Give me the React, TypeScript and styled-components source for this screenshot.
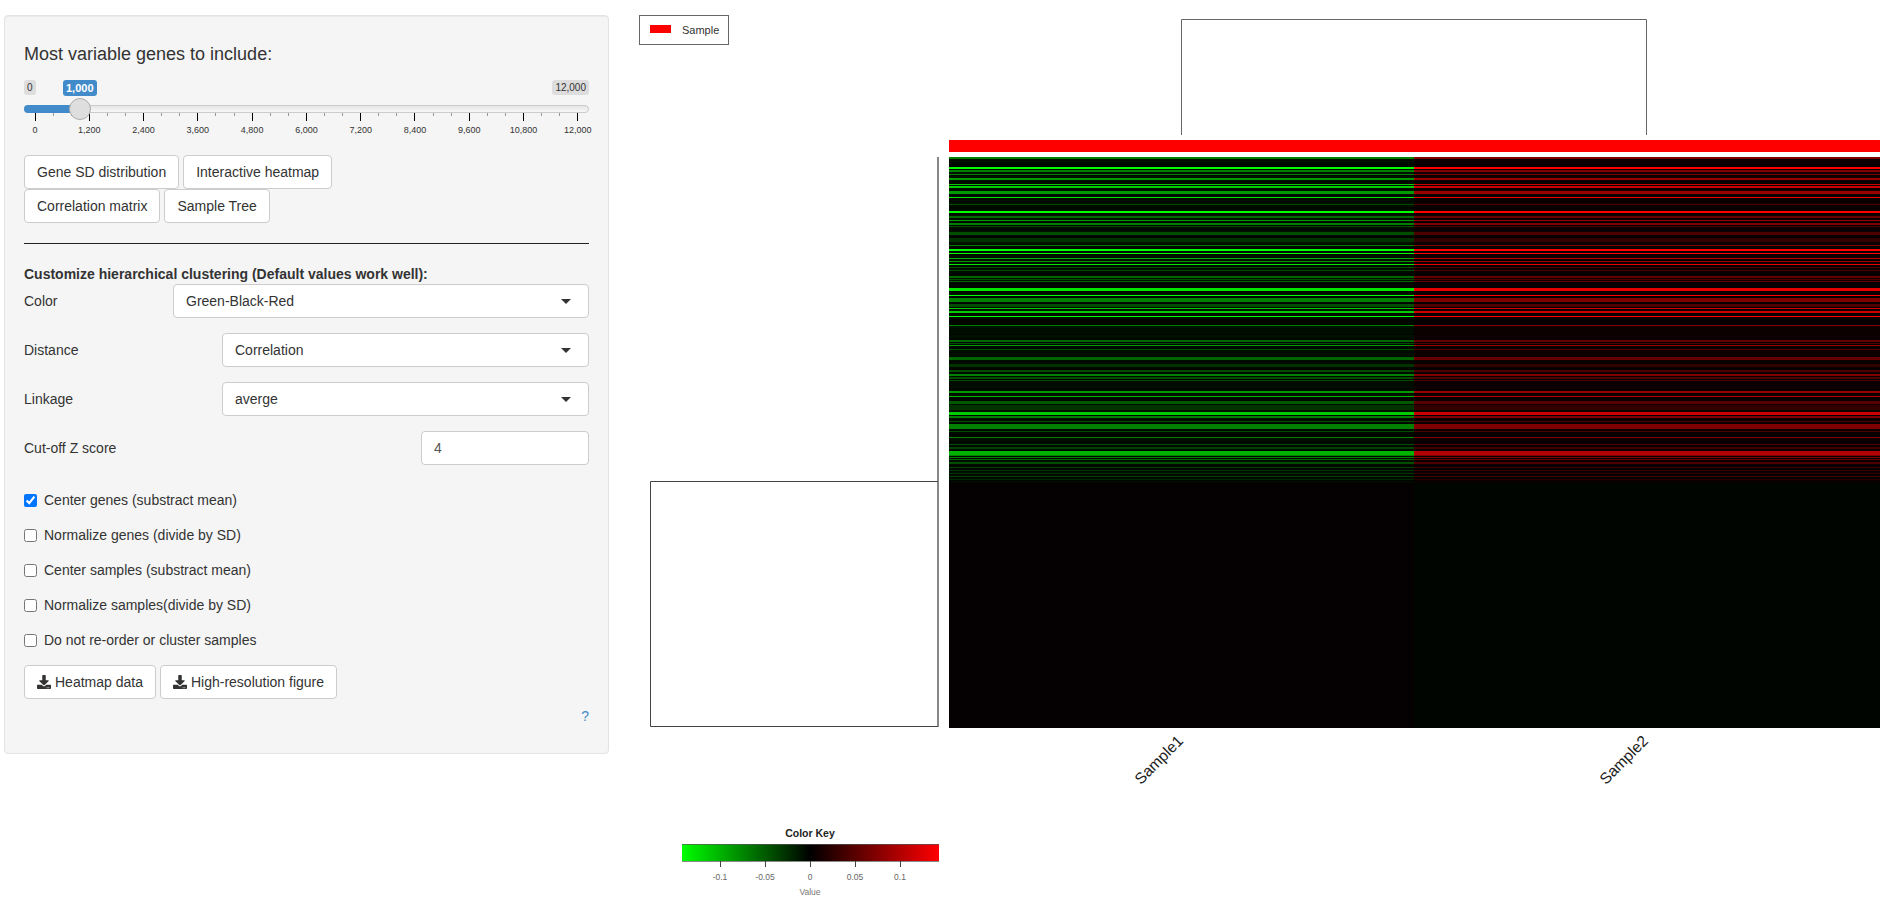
import React from 'react'
import styled, { createGlobalStyle } from 'styled-components'
import { FaDownload } from 'react-icons/fa'

const GlobalStyle = createGlobalStyle`
  html, body {
    margin: 0;
    background: #fff;
    font-family: "Liberation Sans", Arial, sans-serif;
    font-size: 14px;
    color: #333;
    overflow: hidden;
  }
  * { box-sizing: border-box; }
`

const Page = styled.div`
  display: flex;
  width: 1888px;
  height: 903px;
`
const Sidebar = styled.div`
  flex: 0 0 630px;
  padding: 15px 21px 0 4px;
`
const Well = styled.div`
  background: #f5f5f5;
  border: 1px solid #e3e3e3;
  border-radius: 4px;
  box-shadow: inset 0 1px 1px rgba(0, 0, 0, 0.05);
  padding: 19px 19px 27px;
`
const Title = styled.div`
  margin-top: 9px;
  font-size: 18px;
  line-height: 20px;
`
const Slider = styled.div`
  position: relative;
  margin-top: 16px;
  padding-top: 25px;
  height: 75px;
`
const Bubble = styled.span<{ $side: 'left' | 'right' }>`
  position: absolute;
  top: 0;
  ${(p) => p.$side}: 0;
  padding: 1px 3px;
  font-size: 10px;
  line-height: 13px;
  background: #ddd;
  border-radius: 3px;
  color: #333;
`
const ValueBubble = styled.span`
  position: absolute;
  top: 0;
  left: 39px;
  padding: 1px 3px;
  font-size: 11px;
  font-weight: bold;
  line-height: 14px;
  background: #428bca;
  border-radius: 3px;
  color: #fff;
`
const Track = styled.div`
  position: relative;
  height: 8px;
  border: 1px solid #ccc;
  border-radius: 8px;
  background: linear-gradient(to bottom, #ddd -50%, #fff 150%);
`
const Fill = styled.div`
  position: absolute;
  left: -1px;
  top: -1px;
  bottom: -1px;
  background: #428bca;
  border-radius: 8px 0 0 8px;
`
const Handle = styled.div`
  position: absolute;
  top: -8px;
  width: 22px;
  height: 22px;
  border-radius: 50%;
  background: #dedede;
  border: 1px solid #ababab;
`
const Grid = styled.div`
  display: flex;
  justify-content: space-between;
  padding: 0 11px 0 11px;
`
const Tick = styled.div`
  width: 0;
  display: flex;
  flex-direction: column;
  align-items: center;
`
const TickLine = styled.i<{ $major: boolean }>`
  display: block;
  flex: none;
  width: 1px;
  height: ${(p) => (p.$major ? 8 : 3)}px;
  background: ${(p) => (p.$major ? '#000' : '#999')};
`
const TickLabel = styled.span`
  margin-top: 4px;
  font-size: 9px;
  line-height: 11px;
  white-space: nowrap;
  color: #333;
`
const ButtonRow = styled.div`
  display: flex;
  gap: 4px;
`
const Button = styled.button`
  display: inline-flex;
  align-items: center;
  height: 34px;
  padding: 0 12px;
  background: #fff;
  border: 1px solid #ccc;
  border-radius: 4px;
  font: inherit;
  color: #333;
  white-space: nowrap;
  svg { margin-right: 4px; }
`
const Rule = styled.hr`
  margin: 20px 0;
  border: 0;
  border-top: 1px solid #222;
`
const Heading = styled.div`
  font-weight: bold;
  line-height: 20px;
`
const FieldRow = styled.div<{ $gap: number }>`
  display: flex;
  justify-content: space-between;
  align-items: center;
  margin-top: ${(p) => p.$gap}px;
`
const Select = styled.div<{ $width: number }>`
  position: relative;
  width: ${(p) => p.$width}px;
  height: 34px;
  padding: 0 12px;
  line-height: 32px;
  background: #fff;
  border: 1px solid #ccc;
  border-radius: 4px;
  &::after {
    content: '';
    position: absolute;
    right: 17px;
    top: 14px;
    border: 5px solid transparent;
    border-top-color: #333;
    border-bottom: 0;
  }
`
const NumberInput = styled.input`
  width: 168px;
  height: 34px;
  padding: 0 12px;
  background: #fff;
  border: 1px solid #ccc;
  border-radius: 4px;
  font: inherit;
  color: #555;
`
const Checks = styled.div`
  display: flex;
  flex-direction: column;
  gap: 15px;
  margin: 25px 0 15px;
`
const CheckRow = styled.label`
  display: flex;
  align-items: center;
  gap: 7px;
  height: 20px;
  input { margin: 0; width: 13px; height: 13px; }
`
const HelpLink = styled.a`
  display: block;
  margin-top: 7px;
  line-height: 20px;
  text-align: right;
  color: #428bca;
`
const Plot = styled.svg`
  display: block;
  flex: 0 0 1258px;
  height: 903px;
`

const tickValues = Array.from({ length: 31 }, (_, i) => i)

const checks = [
  'Center genes (substract mean)',
  'Normalize genes (divide by SD)',
  'Center samples (substract mean)',
  'Normalize samples(divide by SD)',
  'Do not re-order or cluster samples',
]

// [y, height, intensity] read off the reference
const bands: [number, number, number][] = [
  [157, 2, 0.5], [167, 2, 1], [170, 2, 0.5], [174, 1, 0.5], [178, 2, 0.6], [184, 1, 0.8], [186, 2, 0.8],
  [191, 3, 0.6], [197, 1, 0.9], [204, 1, 0.3], [211, 2, 1], [216, 2, 0.4], [220, 1, 0.6], [223, 2, 0.5],
  [226, 1, 0.3], [232, 3, 0.3], [238, 4, 0.2], [245, 1, 0.5], [249, 2, 1], [253, 1, 1], [258, 1, 0.7],
  [261, 1, 0.6], [264, 1, 0.9], [267, 1, 0.3], [270, 1, 0.3], [276, 2, 0.4], [279, 1, 0.3], [281, 1, 0.4],
  [288, 3, 0.9], [295, 1, 1], [298, 4, 0.5], [304, 3, 0.3], [308, 1, 0.8], [311, 2, 0.8], [316, 1, 1],
  [325, 1, 0.5], [340, 2, 0.4], [343, 1, 0.3], [345, 1, 0.6], [349, 1, 0.3], [357, 3, 0.4], [364, 3, 0.2],
  [370, 2, 0.3], [374, 2, 0.5], [377, 2, 0.3], [380, 1, 0.3], [391, 2, 0.6], [396, 1, 0.7], [401, 3, 0.35],
  [405, 5, 0.2], [412, 3, 0.8], [416, 2, 0.5], [421, 1, 0.3], [424, 5, 0.5], [431, 1, 0.3], [437, 1, 0.5],
  [444, 1, 0.3], [447, 2, 0.25], [451, 4, 0.7], [455, 1, 0.5], [457, 1, 0.5], [459, 1, 0.4], [462, 2, 0.3],
  [467, 1, 0.25], [470, 1, 0.2], [473, 1, 0.2], [476, 1, 0.25], [479, 1, 0.15],
]

// faint rows that sit between the strong bands
const faintRows: [number, number][] = []
let seed = 17
for (let y = 157; y < 483; y++) {
  seed = (seed * 137 + 59) % 1024
  faintRows.push([y, 0.015 + (seed % 100) / 1800])
}

const Heatmap = () => (
  <g shapeRendering="crispEdges">
    <rect x={949} y={157} width={465} height={571} fill="#050001" />
    <rect x={1414} y={157} width={466} height={571} fill="#000500" />
    {[...faintRows.map(([y, v]) => [y, 1, v]), ...bands].map(([y, h, v]) => {
      const level = Math.round(v * 255)
      return (
        <g key={`${y}-${v}`}>
          <rect x={949} y={y} width={465} height={h} fill={`rgb(0,${level},0)`} />
          <rect x={1414} y={y} width={466} height={h} fill={`rgb(${level},0,0)`} />
        </g>
      )
    })}
  </g>
)

const keyTicks: [number, string][] = [
  [720, '-0.1'],
  [765, '-0.05'],
  [810, '0'],
  [855, '0.05'],
  [900, '0.1'],
]

export default function App() {
  return (
    <Page>
      <GlobalStyle />
      <Sidebar>
        <Well>
          <Title>Most variable genes to include:</Title>
          <Slider>
            <Bubble $side="left">0</Bubble>
            <ValueBubble>1,000</ValueBubble>
            <Bubble $side="right">12,000</Bubble>
            <Track>
              <Fill style={{ width: 50 }} />
              <Handle style={{ left: 44 }} />
            </Track>
            <Grid>
              {tickValues.map((i) => (
                <Tick key={i}>
                  <TickLine $major={i % 3 === 0} />
                  {i % 3 === 0 && <TickLabel>{(i * 400).toLocaleString('en-US')}</TickLabel>}
                </Tick>
              ))}
            </Grid>
          </Slider>
          <ButtonRow>
            <Button>Gene SD distribution</Button>
            <Button>Interactive heatmap</Button>
          </ButtonRow>
          <ButtonRow>
            <Button>Correlation matrix</Button>
            <Button>Sample Tree</Button>
          </ButtonRow>
          <Rule />
          <Heading>Customize hierarchical clustering (Default values work well):</Heading>
          <FieldRow $gap={0}>
            <span>Color</span>
            <Select $width={416}>Green-Black-Red</Select>
          </FieldRow>
          <FieldRow $gap={15}>
            <span>Distance</span>
            <Select $width={367}>Correlation</Select>
          </FieldRow>
          <FieldRow $gap={15}>
            <span>Linkage</span>
            <Select $width={367}>averge</Select>
          </FieldRow>
          <FieldRow $gap={15}>
            <span>Cut-off Z score</span>
            <NumberInput defaultValue="4" />
          </FieldRow>
          <Checks>
            {checks.map((text, i) => (
              <CheckRow key={text}>
                <input type="checkbox" defaultChecked={i === 0} />
                {text}
              </CheckRow>
            ))}
          </Checks>
          <ButtonRow>
            <Button>
              <FaDownload size={14} />
              Heatmap data
            </Button>
            <Button>
              <FaDownload size={14} />
              High-resolution figure
            </Button>
          </ButtonRow>
          <HelpLink>?</HelpLink>
        </Well>
      </Sidebar>
      <Plot viewBox="630 0 1258 903" fontFamily="Liberation Sans, Arial, sans-serif">
        <defs>
          <linearGradient id="colorKey">
            <stop offset="0" stopColor="#00ff00" />
            <stop offset="0.5" stopColor="#000000" />
            <stop offset="1" stopColor="#ff0000" />
          </linearGradient>
        </defs>
        <rect x={639.5} y={15.5} width={89} height={29} fill="#fff" stroke="#666" />
        <rect x={650} y={25} width={21} height={8} fill="#ff0000" />
        <text x={682} y={34} fontSize={11} fill="#333">Sample</text>

        <path d="M1181.5 135V19.5H1646.5V135" fill="none" stroke="#666" />
        <rect x={949} y={140} width={931} height={12} fill="#ff0000" />
        <path d="M938 481.5H650.5V726.5H938" fill="none" stroke="#444" />
        <path d="M938 157V727" stroke="#555" strokeWidth={1.4} />
        <Heatmap />

        <text x={1159} y={765} fontSize={15.5} fill="#222" textAnchor="middle" transform="rotate(-45 1159 760)">Sample1</text>
        <text x={1624} y={765} fontSize={15.5} fill="#222" textAnchor="middle" transform="rotate(-45 1624 760)">Sample2</text>

        <text x={810} y={837} fontSize={10.5} fontWeight="bold" fill="#222" textAnchor="middle">Color Key</text>
        <rect x={682} y={844} width={257} height={17} fill="url(#colorKey)" />
        <path d="M682 844.5H939M682 861.5H939" stroke="#555" strokeOpacity={0.7} />
        {keyTicks.map(([x, label]) => (
          <g key={label}>
            <path d={`M${x}.5 861V867`} stroke="#444" />
            <text x={x} y={880} fontSize={8.5} fill="#666" textAnchor="middle">{label}</text>
          </g>
        ))}
        <text x={810} y={895} fontSize={8.5} fill="#777" textAnchor="middle">Value</text>
      </Plot>
    </Page>
  )
}
